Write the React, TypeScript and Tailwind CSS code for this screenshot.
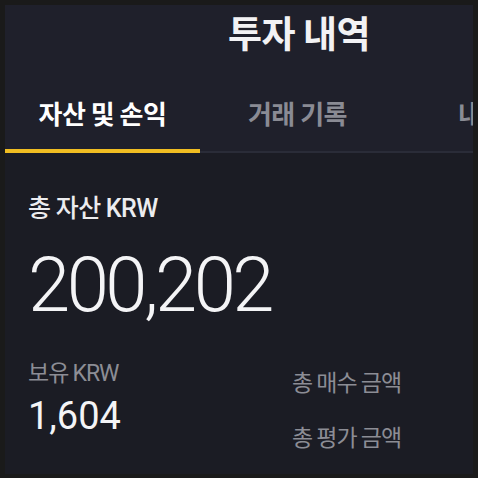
import React from "react";

const kr = { fontFamily: '"Noto Sans CJK KR", "Noto Sans", sans-serif' };
const num = { fontFamily: 'Roboto, "Noto Sans", sans-serif' };

const tabs = [
  { label: "자산 및 손익", active: true },
  { label: "거래 기록", active: false },
  { label: "내 자산", active: false },
];

export default function App() {
  return (
    <div className="w-[478px] h-[478px] bg-[#1a1a1a] pt-[5px] px-[5px] pb-[4px]">
      <div className="w-full h-full flex flex-col overflow-hidden bg-[#1b1c24]" style={kr}>
        {/* header */}
        <div className="bg-[#1f202b]">
          <div className="h-[58px] pl-[223px]">
            <h1 className="text-[37px] font-bold text-[#f2f2f4] leading-[54px] tracking-[-0.5px]">
              투자 내역
            </h1>
          </div>
          <div className="flex h-[90px]">
            {tabs.map((t) => (
              <div key={t.label} className="w-[195px] shrink-0 flex flex-col justify-end">
                <div
                  className={`flex-1 flex items-center ${t.active ? "justify-center text-white" : "text-[#8a8b94]"} ${
                    t.label === "거래 기록" ? "justify-center" : ""
                  } ${t.label === "내 자산" ? "pl-[63px]" : ""} text-[26px] font-bold tracking-[-0.5px] pt-[12px]`}
                >
                  {t.label}
                </div>
                <div className={t.active ? "h-[4px] bg-[#f0bd22]" : "h-[4px] flex flex-col justify-end"}>
                  {!t.active && <div className="h-[2px] bg-[#2a2c38]" />}
                </div>
              </div>
            ))}
          </div>
        </div>

        {/* body */}
        <div className="flex-1 px-[23px] pt-[37px]">
          <div className="text-[25px] font-medium text-[#ececef] leading-[32px] tracking-[-0.5px]">
            총 자산 <span style={num} className="font-medium">KRW</span>
          </div>
          <div style={num} className="mt-[20px] text-[76px] font-light text-[#f4f4f6] leading-[80px] tracking-[-3.5px]">
            200,202
          </div>
          <div className="mt-[31px] flex">
            <div className="w-[264px]">
              <div className="text-[23px] text-[#8c8d95] leading-[30px] tracking-[-1px]">
                보유 <span style={num}>KRW</span>
              </div>
              <div style={num} className="mt-[5px] text-[38px] text-[#f4f4f6] leading-[44px]">
                1,604
              </div>
            </div>
            <div className="pt-[10px]">
              <div className="text-[23px] text-[#8c8d95] leading-[30px] tracking-[-1px]">총 매수 금액</div>
              <div className="mt-[25px] text-[23px] text-[#8c8d95] leading-[30px] tracking-[-1px]">총 평가 금액</div>
            </div>
          </div>
        </div>
      </div>
    </div>
  );
}
